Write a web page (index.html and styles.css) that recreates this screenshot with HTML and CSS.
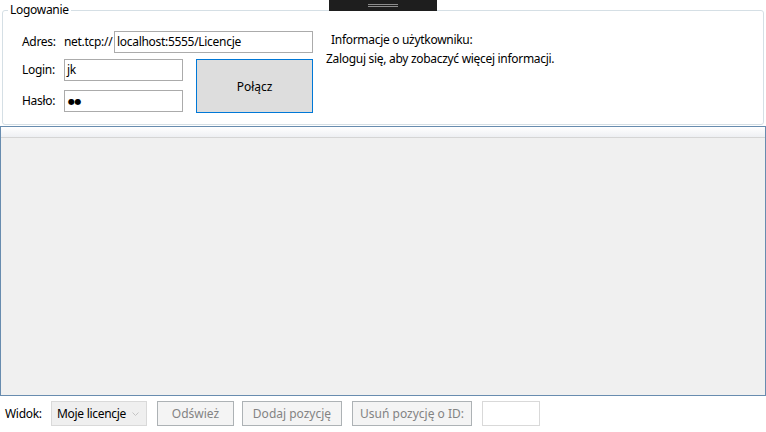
FILE: index.html
```html
<!DOCTYPE html>
<html lang="pl">
<head>
<meta charset="utf-8">
<title>Licencje</title>
<link rel="stylesheet" href="styles.css">
</head>
<body>
<div class="window">
  <fieldset class="login">
    <legend>Logowanie</legend>
    <div class="login-body">
      <div class="form">
        <span class="lbl r1">Adres:</span>
        <div class="addr"><span class="proto">net.tcp://</span><div class="tb tb-addr">localhost:5555/Licencje</div></div>
        <span class="lbl r2">Login:</span>
        <div class="tb tb-login">jk</div>
        <button class="connect" type="button">Połącz</button>
        <span class="lbl r3">Hasło:</span>
        <div class="tb tb-pass"><span class="dots">●●</span></div>
      </div>
      <div class="info">
        <div class="info-title">Informacje o użytkowniku:</div>
        <div class="info-text">Zaloguj się, aby zobaczyć więcej informacji.</div>
      </div>
    </div>
  </fieldset>
  <div class="datagrid"><div class="datagrid-head"></div></div>
  <div class="toolbar">
    <span class="tlbl">Widok:</span>
    <div class="combo"><span>Moje licencje</span><svg class="chev" width="7" height="4" viewBox="0 0 7 4"><polyline points="0.5,0.5 3.5,3.5 6.5,0.5" fill="none" stroke="#c4c4c4" stroke-width="1"/></svg></div>
    <button class="btn b-refresh" type="button" disabled>Odśwież</button>
    <button class="btn b-add" type="button" disabled>Dodaj pozycję</button>
    <button class="btn b-del" type="button" disabled>Usuń pozycję o ID:</button>
    <div class="idbox"></div>
  </div>
  <div class="debug-bar"><span class="grip"></span></div>
</div>
</body>
</html>
```
FILE: styles.css
```css
* { box-sizing: border-box; }
body {
  margin: 0;
  font-family: "Noto Sans", "DejaVu Sans", sans-serif;
  font-size: 12px;
  letter-spacing: -0.3px;
  color: #000;
  background: #fff;
}
.window {
  position: relative;
  width: 766px;
  height: 432px;
  display: flex;
  flex-direction: column;
  overflow: hidden;
}
.login {
  margin: 2px 2px 0 2px;
  padding: 13px 10px 10px 19px;
  border: 1px solid #d5dfe5;
  border-radius: 3px;
  min-width: 0;
  height: 123px;
}
.login legend {
  padding: 0 2px;
  margin-left: -14px;
  line-height: 16px;
  font-size: 12px;
}
.login-body { display: flex; }
.form {
  display: grid;
  grid-template-columns: 42px 119px 13px 117px;
  grid-template-rows: 28px 31px 23px;
  align-items: start;
}
.lbl { grid-column: 1; height: 22px; line-height: 22px; }
.r1 { grid-row: 1; }
.r2 { grid-row: 2; }
.r3 { grid-row: 3; }
.addr { grid-column: 2 / 5; grid-row: 1; display: flex; align-items: center; }
.proto { width: 50px; line-height: 22px; }
.tb {
  height: 22px;
  border: 1px solid #ababab;
  background: #fff;
  line-height: 20px;
  padding-left: 2px;
}
.tb-addr { flex: 1; }
.tb-login { grid-column: 2; grid-row: 2; }
.tb-pass { grid-column: 2; grid-row: 3; }
.dots { font-size: 8px; letter-spacing: -0.5px; vertical-align: top; padding-left: 1px; }
.connect {
  grid-column: 4;
  grid-row: 2 / 4;
  align-self: stretch;
  height: 54px;
  margin: 0;
  border: 1px solid #0078d7;
  background: #dddddd;
  font: inherit;
  color: #000;
  padding: 0;
}
.info { margin-left: 13px; }
.info-title { margin-top: 1px; padding-left: 5px; line-height: 16px; }
.info-text { margin-top: 3px; line-height: 16px; }
.datagrid {
  margin-top: 1px;
  height: 270px;
  border: 1px solid #688caf;
  background: #f0f0f0;
}
.datagrid-head {
  height: 11px;
  background: linear-gradient(#ffffff, #eef0f3);
  border-bottom: 1px solid #d5d5d5;
}
.toolbar {
  display: flex;
  align-items: center;
  padding: 5px 0 0 5px;
  height: 30px;
}
.tlbl { width: 46px; }
.combo {
  width: 96px;
  height: 25px;
  border: 1px solid #d9d9d9;
  background: #efefef;
  display: flex;
  align-items: center;
  justify-content: space-between;
  padding: 0 7px 0 5px;
  margin-right: 10px;
}
.chev { display: block; flex: none; }
.btn {
  height: 25px;
  margin: 0 10px 0 0;
  padding: 0;
  border: 1px solid #adb2b5;
  background: #f4f4f4;
  color: #838383;
  font: inherit;
}
.b-refresh { width: 77px; margin-right: 8px; }
.b-add { width: 100px; }
.b-del { width: 120px; }
.idbox {
  width: 58px;
  height: 25px;
  border: 1px solid #d9d9d9;
  background: #fff;
}
.debug-bar {
  position: absolute;
  top: 0;
  left: 329px;
  width: 108px;
  height: 11px;
  background: #1e1e1e;
}
.grip {
  position: absolute;
  left: 39px;
  top: 4px;
  width: 30px;
  height: 3px;
  border-top: 1px solid #8c8c8c;
  border-bottom: 1px solid #8c8c8c;
}
```
